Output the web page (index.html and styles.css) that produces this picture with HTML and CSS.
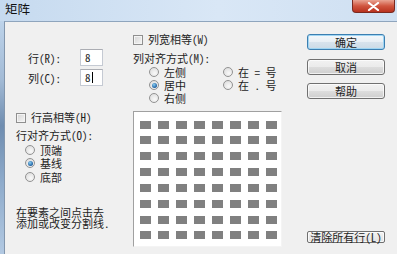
FILE: index.html
```html
<!DOCTYPE html>
<html lang="zh-CN">
<head>
  <meta charset="UTF-8">
  <title>矩阵</title>
  <link rel="stylesheet" href="styles.css">
</head>
<body>
  <div class="window">
    <div class="titlebar">
      <span class="title">矩阵</span>
      <span class="close">
        <svg width="13" height="9" viewBox="0 0 13 9">
          <path d="M2 1 L11 8 M11 1 L2 8" stroke="#ffffff" stroke-width="2.2" stroke-linecap="round"/>
        </svg>
      </span>
    </div>
    <div class="frame">
      <div class="edge"></div>
      <div class="client">
        <div class="col-left">
          <div class="dims">
            <div class="dim-row"><span class="dim-label">行(R):</span><span class="field">8</span></div>
            <div class="dim-row"><span class="dim-label">列(C):</span><span class="field">8<i class="caret"></i></span></div>
          </div>
          <div class="check"><span class="box"></span>行高相等(H)</div>
          <div class="caption">行对齐方式(O):</div>
          <div class="radios">
            <div class="radio"><span class="dot"></span>顶端</div>
            <div class="radio on"><span class="dot"></span>基线</div>
            <div class="radio"><span class="dot"></span>底部</div>
          </div>
          <p class="note">在要素之间点击去<br>添加或改变分割线.</p>
        </div>

        <div class="col-mid">
          <div class="check"><span class="box"></span>列宽相等(W)</div>
          <div class="caption">列对齐方式(M):</div>
          <div class="radios grid">
            <div class="radio"><span class="dot"></span>左侧</div>
            <div class="radio on"><span class="dot"></span>居中</div>
            <div class="radio"><span class="dot"></span>右侧</div>
            <div class="radio"><span class="dot"></span>在 = 号</div>
            <div class="radio"><span class="dot"></span>在 . 号</div>
          </div>
          <div class="matrix">
            <span></span><span></span><span></span><span></span><span></span><span></span><span></span><span></span>
            <span></span><span></span><span></span><span></span><span></span><span></span><span></span><span></span>
            <span></span><span></span><span></span><span></span><span></span><span></span><span></span><span></span>
            <span></span><span></span><span></span><span></span><span></span><span></span><span></span><span></span>
            <span></span><span></span><span></span><span></span><span></span><span></span><span></span><span></span>
            <span></span><span></span><span></span><span></span><span></span><span></span><span></span><span></span>
            <span></span><span></span><span></span><span></span><span></span><span></span><span></span><span></span>
            <span></span><span></span><span></span><span></span><span></span><span></span><span></span><span></span>
          </div>
        </div>

        <div class="col-right">
          <button class="btn default">确定</button>
          <button class="btn">取消</button>
          <button class="btn">帮助</button>
          <button class="btn small">清除所有行(L)</button>
        </div>
      </div>
    </div>
  </div>
</body>
</html>
```

FILE: styles.css
```css
body {
  margin: 0;
  font-family: "Noto Sans Mono CJK SC", "Noto Sans CJK SC", sans-serif;
  font-size: 11px;
  color: #1e1e1e;
  background: #f0f0f0;
}

.window {
  width: 397px;
  height: 254px;
  display: flex;
  flex-direction: column;
  overflow: hidden;
}

.titlebar {
  height: 21px;
  display: flex;
  align-items: flex-start;
  background: linear-gradient(to right, #c6daef, #d9e7f6 55%, #cfe0f2);
}

.title {
  font-size: 12.5px;
  line-height: 18px;
  padding-left: 5px;
  color: #111;
}

.close {
  margin-left: auto;
  margin-right: 2px;
  width: 43px;
  height: 13px;
  box-sizing: border-box;
  display: flex;
  align-items: center;
  justify-content: center;
  border: 1px solid #7a2a20;
  border-top: none;
  border-radius: 0 0 4px 4px;
  background: linear-gradient(to bottom, #e9a493, #d0553f 50%, #b8321f);
}

.frame {
  flex: 1;
  display: flex;
}

.edge {
  width: 4px;
  background: linear-gradient(to bottom, #bdd3ea, #a3bbd6 25%, #6f8db0 45%, #8faccc 70%, #b2c9e2);
}

.client {
  flex: 1;
  display: flex;
  border-left: 1px solid #8296ad;
  border-top: 1px solid #8fa5bd;
  background: #f0f0f0;
}

.col-left {
  width: 117px;
  padding-left: 11px;
  display: flex;
  flex-direction: column;
}

.col-mid {
  width: 173px;
  display: flex;
  flex-direction: column;
}

.col-right {
  flex: 1;
  display: flex;
  flex-direction: column;
  align-items: flex-start;
  gap: 8.5px;
  padding: 12px 0 11px 1px;
}

.dims {
  margin: 27px 0 0 12px;
  display: flex;
  flex-direction: column;
  gap: 3px;
}

.dim-row {
  display: flex;
  align-items: center;
  height: 17px;
}

.dim-label {
  width: 52px;
}

.field {
  width: 23px;
  height: 17px;
  box-sizing: border-box;
  padding-left: 4px;
  line-height: 15px;
  background: #fff;
  border: 1px solid #c5cad3;
  border-top-color: #abadb3;
  display: flex;
  align-items: center;
}

.caret {
  width: 1px;
  height: 11px;
  margin-left: 1px;
  background: #000;
}

.check {
  display: flex;
  align-items: center;
  gap: 5px;
  line-height: 13px;
}

.col-left .check {
  margin-top: 25px;
}

.col-mid .check {
  margin-top: 11px;
}

.box {
  width: 10px;
  height: 10px;
  box-sizing: border-box;
  border: 1px solid #8f8f8f;
  background: linear-gradient(135deg, #d4d4d4, #f6f6f6);
  box-shadow: inset 0 0 0 1px #f4f4f4;
}

.caption {
  margin-top: 5px;
  line-height: 13px;
}

.col-mid .caption {
  margin-top: 5.5px;
}

.radios {
  margin-top: 1px;
  padding-left: 9px;
}

.radio {
  display: flex;
  align-items: center;
  gap: 5px;
  height: 13.5px;
}

.radios.grid {
  padding-left: 16px;
  display: grid;
  grid-template-rows: repeat(3, 13px);
  grid-template-columns: 74px auto;
  grid-auto-flow: column;
}

.radios.grid .radio {
  height: 13px;
}

.dot {
  width: 10px;
  height: 10px;
  box-sizing: border-box;
  border-radius: 50%;
  border: 1px solid #929292;
  background: radial-gradient(circle at 60% 65%, #f9f9f9, #d8d8d8);
  display: flex;
  align-items: center;
  justify-content: center;
}

.radio.on .dot::after {
  content: "";
  width: 5px;
  height: 5px;
  border-radius: 50%;
  background: radial-gradient(circle at 40% 35%, #8ad0f5, #1d5e9e 70%);
}

.note {
  margin: 23px 0 0;
  line-height: 11px;
}

.matrix {
  margin-top: 6px;
  width: 149px;
  height: 136px;
  box-sizing: border-box;
  background: #fff;
  border: 1px solid #f4f4f4;
  border-top-color: #a0a0a0;
  border-left-color: #a0a0a0;
  padding: 9px 0 0 6px;
  display: grid;
  grid-template-columns: repeat(8, 11px);
  grid-auto-rows: 8px;
  column-gap: 7px;
  row-gap: 7.85px;
}

.matrix span {
  background: #808080;
}

.btn {
  width: 78px;
  height: 16px;
  padding: 0;
  font: inherit;
  line-height: 14px;
  color: #1e1e1e;
  border: 1px solid #707070;
  border-radius: 3px;
  background: linear-gradient(to bottom, #f2f2f2, #ebebeb 48%, #dddddd 52%, #cfcfcf);
  box-shadow: inset 0 0 0 1px rgba(255, 255, 255, 0.7);
}

.btn.default {
  border-color: #3c7fb1;
  box-shadow: inset 0 0 0 1px #9fd5f3;
  background: linear-gradient(to bottom, #f4f8fb, #e8eff5 48%, #d7e3ed 52%, #cbdae6);
}

.btn.small {
  margin-top: auto;
  height: 12px;
  line-height: 10px;
  border-radius: 2px;
  background: linear-gradient(to bottom, #f3f3f3, #e2e2e2);
}
```
